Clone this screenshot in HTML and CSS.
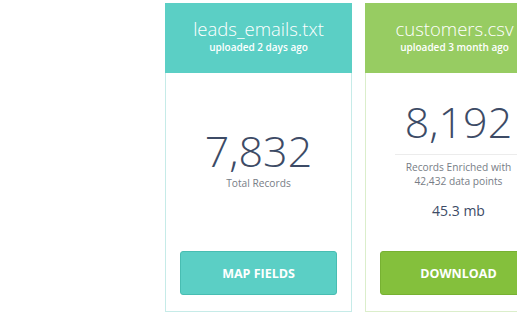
FILE: index.html
```html
<!DOCTYPE html>
<html lang="en">
<head>
    <meta charset="UTF-8">
    <meta name="viewport" content="width=device-width, initial-scale=1.0">
    <title>Uploaded Files</title>
    <link rel="stylesheet" href="styles.css">
</head>
<body>
    <div class="files">
        <!-- Raw upload -->
        <div class="file-card teal">
            <div class="file-head">
                <div class="file-name">leads_emails.txt</div>
                <div class="file-date">uploaded 2 days ago</div>
            </div>
            <div class="file-body">
                <div class="stat">
                    <div class="stat-num">7,832</div>
                    <div class="stat-label">Total Records</div>
                </div>
                <button class="file-btn">MAP FIELDS</button>
            </div>
        </div>

        <!-- Enriched file -->
        <div class="file-card green">
            <div class="file-head">
                <div class="file-name">customers.csv</div>
                <div class="file-date">uploaded 3 month ago</div>
            </div>
            <div class="file-body">
                <div class="stat enriched">
                    <div class="stat-num">8,192</div>
                    <hr class="divider">
                    <div class="stat-label">Records Enriched with<br>42,432 data points</div>
                    <div class="file-size">45.3 mb</div>
                </div>
                <button class="file-btn">DOWNLOAD</button>
            </div>
        </div>
    </div>
</body>
</html>
```

FILE: styles.css
```css
:root {
    --teal: #5bcfc5;
    --teal-dark: #48bdb2;
    --teal-line: #c6ebe8;
    --green: #97cc62;
    --green-btn: #84c03c;
    --green-dark: #77b132;
    --green-line: #dbeecb;
    --ink: #3d4b66;
    --muted: #777d86;
}
* {
    box-sizing: border-box;
    margin: 0;
    padding: 0;
}
body {
    font-family: 'Open Sans', 'Noto Sans', sans-serif;
    background-color: #fff;
    color: var(--ink);
    overflow: hidden;
}
.files {
    display: flex;
    gap: 13px;
    padding: 3px 0 0 165px;
    width: 800px;
}
.file-card {
    width: 187px;
    height: 309px;
    flex-shrink: 0;
    display: flex;
    flex-direction: column;
    border: 1px solid var(--teal-line);
    border-top: none;
    background: #fff;
}
.file-card.green {
    border-color: var(--green-line);
}
.file-head {
    height: 70px;
    margin: 0 -1px;
    padding-top: 14px;
    text-align: center;
    color: #fff;
    background-color: var(--teal);
}
.green .file-head {
    background-color: var(--green);
    padding-right: 8px;
}
.file-name {
    font-size: 18.5px;
    font-weight: 300;
    line-height: 24px;
}
.file-date {
    font-size: 10px;
    font-weight: 600;
    line-height: 12px;
}
.file-body {
    flex: 1;
    display: flex;
    flex-direction: column;
    justify-content: space-between;
    padding: 0 14px 16px;
}
.stat {
    text-align: center;
    padding-top: 53px;
}
.stat.enriched {
    padding-top: 24px;
}
.stat-num {
    font-size: 43px;
    font-weight: 300;
    line-height: 50px;
}
.stat-label {
    font-size: 10.2px;
    line-height: 14px;
    color: var(--muted);
}
.divider {
    border: none;
    border-top: 1px solid #ececec;
    margin: 7px 15px 5px;
}
.file-size {
    margin-top: 14px;
    font-size: 14px;
    line-height: 18px;
}
.file-btn {
    height: 44px;
    width: 100%;
    border: 1px solid var(--teal-dark);
    border-radius: 3px;
    background-color: var(--teal);
    color: #fff;
    font-family: inherit;
    font-size: 12.5px;
    font-weight: 700;
    cursor: pointer;
}
.green .file-btn {
    background-color: var(--green-btn);
    border-color: var(--green-dark);
}
```
